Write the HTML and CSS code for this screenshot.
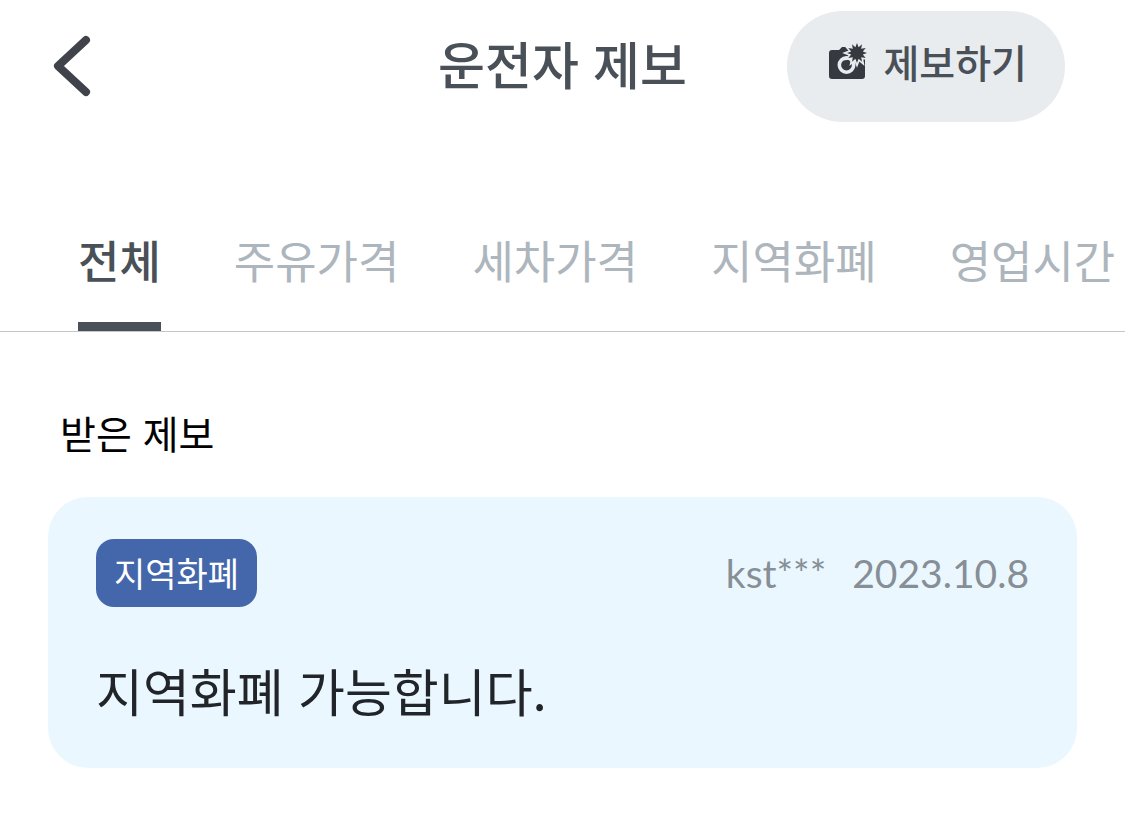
FILE: index.html
```html
<!DOCTYPE html>
<html lang="ko">
<head>
	<meta charset="UTF-8">
	<meta name="viewport" content="width=device-width">
	<title>운전자 제보</title>
	<link rel="stylesheet" href="styles.css">
</head>
<body>
	<header class="top">
		<button type="button" class="back" aria-label="뒤로">
			<svg width="38" height="62" viewBox="0 0 38 62"><path d="M34 4L6 30L34 56" fill="none" stroke="#41434b" stroke-width="8" stroke-linecap="round" stroke-linejoin="round"/></svg>
		</button>
		<h1>운전자 제보</h1>
		<button type="button" class="report">
			<svg width="38" height="38" viewBox="0 0 38 38">
				<path fill="#343a40" d="M3 6h7l3-3h9l14 10v19q0 3-3 3H3q-3 0-3-3V9q0-3 3-3z"/>
				<circle cx="17.500" cy="21" r="7.200" fill="#343a40" stroke="#e9ecef" stroke-width="3.600"/>
				<path fill="#343a40" stroke="#e9ecef" stroke-width="3.400" paint-order="stroke" d="M28-1l1.600 4.200 3.400-2.900-.8 4.500 4.500-.8-2.900 3.400L38 9l-4.200 1.600 2.900 3.400-4.500-.8.800 4.500-3.400-2.900L28 19l-1.600-4.200-3.400 2.900.800-4.500-4.500.800 2.900-3.400L18 9l4.200-1.600-2.900-3.400 4.500.8-.8-4.500 3.400 2.900z"/>
			</svg>
			<span>제보하기</span>
		</button>
	</header>
	<nav class="tabs">
		<a href="#" class="on">전체</a>
		<a href="#">주유가격</a>
		<a href="#">세차가격</a>
		<a href="#">지역화폐</a>
		<a href="#">영업시간</a>
	</nav>
	<main>
		<h2>받은 제보</h2>
		<article class="card">
			<div class="info">
				<span class="badge">지역화폐</span>
				<span class="meta"><span>kst***</span><time datetime="2023-10-08">2023.10.8</time></span>
			</div>
			<p>지역화폐 가능합니다.</p>
		</article>
	</main>
</body>
</html>
```

FILE: styles.css
```css
*{box-sizing: border-box;}
body,h1,h2,p{margin: 0;padding: 0;}
body{background: #fff;color: #212529;font-family: "Noto Sans CJK KR", sans-serif;overflow-x: hidden;}
button{border: 0;background: none;padding: 0;font-family: inherit;cursor: pointer;}
a{text-decoration: none;}
svg{display: block;flex: none;overflow: visible;}

.top{display: grid;grid-template-columns: 1fr auto 1fr;align-items: center;padding: 11px 60px 0;}
.back{justify-self: start;margin-left: -8px;}
h1{padding-bottom: 8px;font-size: 51px;line-height: 72px;font-weight: 500;color: #495057;}
.report{justify-self: end;display: flex;align-items: center;gap: 16px;height: 111px;padding: 0 38px 8px 42px;border-radius: 56px;background: #e9ecef;color: #495057;font-size: 39px;font-weight: 500;white-space: nowrap;}
.report span{padding-bottom: 4px;}

.tabs{display: flex;gap: 73px;margin-top: 96px;padding-left: 78px;border-bottom: 1px solid #c4c6c8;overflow: hidden;}
.tabs a{flex: none;height: 113px;border-bottom: 9px solid transparent;font-size: 45px;line-height: 84px;font-weight: 400;color: #adb5bd;}
.tabs .on{border-color: #495057;color: #495057;font-weight: 500;}

main{padding: 70px 48px;}
h2{padding-left: 12px;font-size: 39px;line-height: 60px;font-weight: 400;color: #000;}
.card{margin-top: 35px;padding: 42px 48px;border-radius: 40px;background: #ebf7ff;}
.info{display: flex;align-items: center;justify-content: space-between;}
.badge{padding: 0 18px;border-radius: 18px;background: #4466aa;color: #fff;font-size: 34px;line-height: 68px;}
.meta{display: flex;gap: 26px;font-family: Lato, "Noto Sans CJK KR", sans-serif;font-size: 39px;line-height: 60px;color: #868e96;}
.card p{margin-top: 47px;font-size: 51px;line-height: 72px;}
```
